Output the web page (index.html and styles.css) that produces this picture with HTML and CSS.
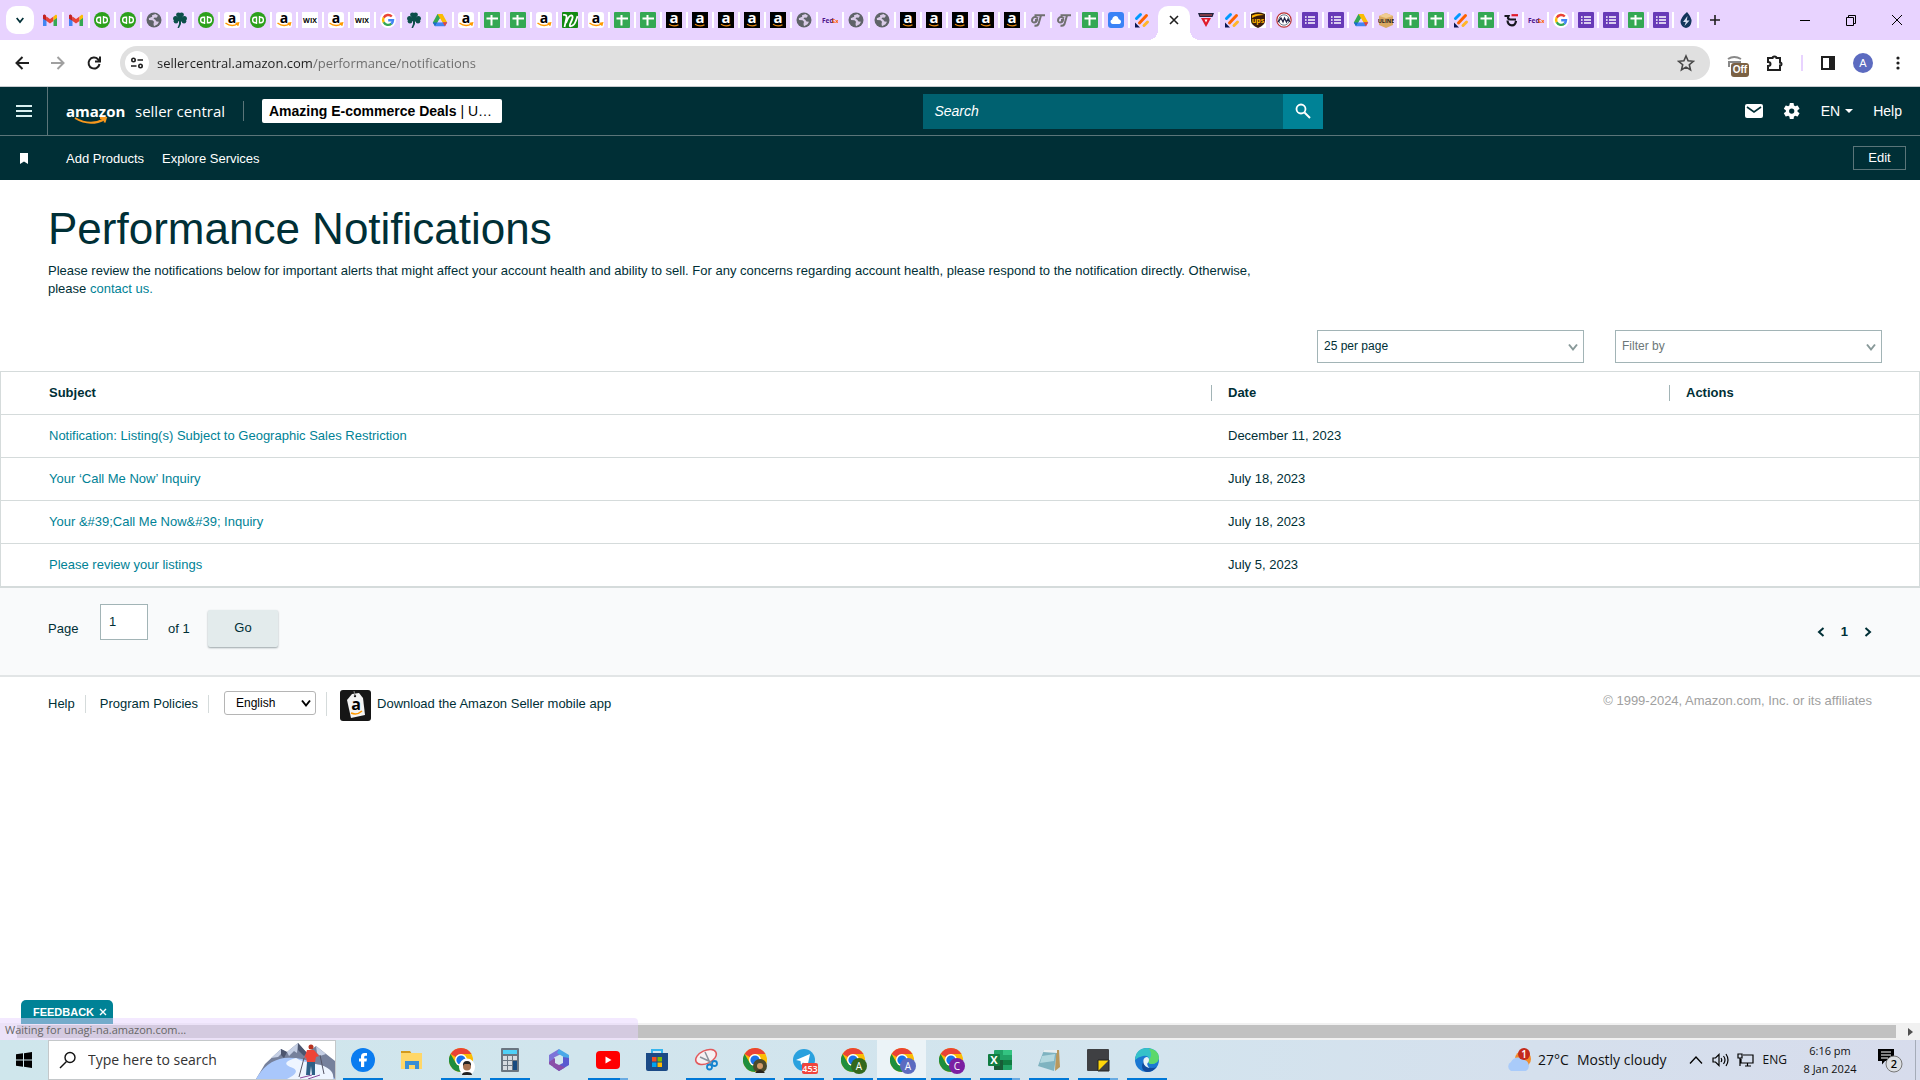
FILE: index.html
```html
<!DOCTYPE html>
<html lang="en">
<head>
<meta charset="utf-8">
<title>Performance Notifications</title>
<link rel="stylesheet" href="styles.css">
</head>
<body>
<svg class="sprite" aria-hidden="true">
  <defs>
    <symbol id="gmail" viewBox="0 0 16 16"><path d="M1 3.500 3 2.500V14H1z" fill="#4285f4"/><path d="M13 5v9h2V3.500z" fill="#34a853"/><path d="M1 3.500 4.500 5v4L1 6.500z" fill="#c5221f"/><path d="M4.500 4.500 8 7l3.500-2.500V9L8 11.500 4.500 9z" fill="#ea4335"/><path d="M11.500 4.500 14 2.500l1 1v3L11.500 9z" fill="#fbbc04"/><path d="M1 6v8h3.500V8.500z" fill="#4285f4"/><path d="M15 6v8h-3.500V8.500z" fill="#34a853"/><path d="M1 3.500q1-2 3 0L4.500 9 1 6.500z" fill="#c5221f"/></symbol>
    <symbol id="qb" viewBox="0 0 16 16"><circle cx="8" cy="8" r="8" fill="#2ca01c"/><path d="M6.500 10.700H5.300a2.700 2.700 0 0 1 0-5.400h1.200V12M9.500 4v6.700h1.200a2.700 2.700 0 0 0 0-5.400H9.500" fill="none" stroke="#fff" stroke-width="1.400"/></symbol>
    <symbol id="globe" viewBox="0 0 16 16"><circle cx="8" cy="8" r="7.500" fill="#5f6368"/><path d="M9.500 2 6 3.200l.2 1.600-3.400 1.400L3 8l3.500.2L8 9.800 7.500 12l.5 2.200 3.500-2 1.500-2.400-2.500-.4L9 7.500l-1.500-.7 1-1.300 2 .2 1.500-2z" fill="#d9cbe6"/></symbol>
    <symbol id="clover" viewBox="0 0 16 16"><g fill="#0c4f4a"><circle cx="6.500" cy="2.800" r="2.400"/><circle cx="9.500" cy="2.800" r="2.400"/><circle cx="3.600" cy="6.500" r="2.500"/><circle cx="4" cy="9.300" r="2.300"/><circle cx="12.400" cy="6.500" r="2.500"/><circle cx="12" cy="9.300" r="2.300"/><path d="M6 4h4l2 5-3 .5V12l-2 4H5.500L7 12V9L4 9z"/></g></symbol>
    <symbol id="amz" viewBox="0 0 16 16"><rect width="16" height="16" rx="3" fill="#fff"/><text x="8" y="10.500" class="glyph" font-size="14">a</text><path d="M1.500 11q6 4.500 12 .8M11.500 11.500l3-.5-.8 2.800" fill="none" stroke="#f90" stroke-width="1.500"/></symbol>
    <symbol id="amzk" viewBox="0 0 16 16"><rect width="16" height="16" fill="#000"/><text x="8" y="11" class="glyph glyph-white" font-size="15">a</text><path d="M3 12.300q5 3 9.500.4" fill="none" stroke="#e88a10" stroke-width="1.300"/></symbol>
    <symbol id="wix" viewBox="0 0 16 16"><rect width="16" height="16" fill="#fff"/><text x="8" y="10.500" class="glyph" font-size="7">WIX</text></symbol>
    <symbol id="goog" viewBox="0 0 16 16"><circle cx="8" cy="8" r="8" fill="#fff"/><g fill="none" stroke-width="2.400"><path d="M11.800 4.500A5 5 0 0 0 3.700 5.800" stroke="#ea4335"/><path d="M3.700 5.600a5 5 0 0 0 0 4.800" stroke="#fbbc05"/><path d="M3.700 10.200a5 5 0 0 0 7.700 1.500" stroke="#34a853"/><path d="M11.300 11.800A5 5 0 0 0 13 8.200H8.200" stroke="#4285f4"/></g></symbol>
    <symbol id="drive" viewBox="0 0 16 16"><path d="M5.500 2h5L8 6.300 3 14.200.8 10.500z" fill="#34a853"/><path d="M5.500 2h5l4.700 8.500h-4.800z" fill="#fbbc04"/><path d="M3 14.200 5.300 10.300h9.900L13 14.200z" fill="#4285f4"/><path d="M.8 10.500h4.400L3 14.200z" fill="#1967d2"/><path d="M10.600 10.300h4.600L13 14.200z" fill="#ea4335"/><path d="M8 6.500 10.300 10.300H5.700z" fill="#e8d3ff"/></symbol>
    <symbol id="sheet" viewBox="0 0 16 16"><rect width="16" height="16" rx="1" fill="#34a853"/><path d="M7.500 3v10.500M2.500 6.500h11.500" stroke="#fff" stroke-width="2"/></symbol>
    <symbol id="form" viewBox="0 0 16 16"><rect width="16" height="16" rx="1" fill="#673ab7"/><path d="M6 5h7M6 8h7M6 11h7M3 5h1.600M3 8h1.600M3 11h1.600" stroke="#fff" stroke-width="1.500"/></symbol>
    <symbol id="nn" viewBox="0 0 16 16"><rect width="16" height="16" rx="1" fill="#128a12"/><path d="M1 3q4-1 3.500 3L2.500 15M4 11Q7 3 9.500 3.500T9 10t1.500 3.500Q13 13 15.500 4" fill="none" stroke="#fff" stroke-width="1.800"/></symbol>
    <symbol id="fedex" viewBox="0 0 16 16"><text x="0" y="10.500" class="glyph-l" font-size="6.500" fill="#4d148c">Fed</text><text x="10" y="10.500" class="glyph-l" font-size="6" fill="#ff6200">Ex</text></symbol>
    <symbol id="tt" viewBox="0 0 16 16"><path d="M4.500 3.200H15M11 3.500 8.500 12q-1 2.300-4 1.500M8 6.500q-3.500-3-5.500 0-1.500 3.500 1.500 4 2.500 0 3-2.500H5" fill="none" stroke="#707070" stroke-width="2"/></symbol>
    <symbol id="cloud" viewBox="0 0 16 16"><rect width="16" height="16" rx="3" fill="#3b82f6"/><path d="M4.500 12a2.300 2.300 0 0 1-.3-4.500A4 4 0 0 1 8 4q1.800 0 2.800 3.200A2.500 2.500 0 0 1 11.500 12z" fill="#fff"/></symbol>
    <symbol id="jot" viewBox="0 0 16 16"><g stroke-width="3" stroke-linecap="round"><path d="M2.500 6.500 6.500 2.500" stroke="#0099ff"/><path d="M5.500 11 12.500 3.500" stroke="#ff6100"/><path d="M10 13.500l3.500-3.500" stroke="#ffb629"/></g><path d="M1 10.500V15.500H6z" fill="#0a1551"/></symbol>
    <symbol id="vv" viewBox="0 0 16 16"><path d="M0 1h16l-1.500 4h-13z" fill="#20233f"/><path d="M2 3h12" stroke="#d9534f"/><path d="M3 6h10L8 15z" fill="#e01a2b"/><path d="M6.500 7.500h3L8 10.500z" fill="#fff"/></symbol>
    <symbol id="ups" viewBox="0 0 16 16"><rect width="16" height="16" fill="#fff"/><path d="M1 2q7-3.500 14 0v7q0 4-7 7-7-3-7-7z" fill="#3a1d0c"/><path d="M2 3.500Q8 1 14 3 7 3 2 6z" fill="#ffb500"/><text x="8" y="11" class="glyph" font-size="7" fill="#ffb500">ups</text></symbol>
    <symbol id="seal" viewBox="0 0 16 16"><circle cx="8" cy="8" r="7.200" fill="#fff" stroke="#b33" stroke-width="1.200"/><circle cx="8" cy="8" r="5.200" fill="none" stroke="#678"/><path d="M2 10 5 6l2 4 1.500-4 2 4L12 7l2 3" fill="none" stroke="#224" stroke-width="1.300"/></symbol>
    <symbol id="uline" viewBox="0 0 16 16"><path d="M1 4l7-3 7 3v9l-7 3-7-3z" fill="#d9a860"/><path d="M1 4l7 2 7-2-7-3z" fill="#f0cd92"/><text x="8" y="10.500" class="glyph" font-size="5.500" fill="#222">ULINE</text></symbol>
    <symbol id="jj" viewBox="0 0 16 16"><path d="M1.500 4h4q-1.500 3.500 2 3.500H13M4.500 8.500q.3 4.800 4.500 4.800 3.500 0 4-4.500" fill="none" stroke="#17171f" stroke-width="2.200"/><path d="M8.500 3.200H15" stroke="#e01a2b" stroke-width="2.200"/></symbol>
    <symbol id="flame" viewBox="0 0 16 16"><path d="M9 0q5 6 4.500 9.500Q13 15 8 16 3 15 2.500 10 3 5 9 0z" fill="#12355b"/><path d="M9.500 4 5 10h2.800L6.500 14 11.500 8.500H8.800z" fill="#d6dcef"/></symbol>
    <symbol id="chrome" viewBox="0 0 24 24"><circle cx="12" cy="12" r="12" fill="#fbbc04"/><path d="M12 0a12 12 0 0 1 10.400 6H12a6 6 0 0 0-5.200 3L1.600 6A12 12 0 0 1 12 0z" fill="#ea4335"/><path d="M1.600 6l5.200 9A6 6 0 0 0 14 17.700L12 24A12 12 0 0 1 1.600 6z" fill="#1e8e3e"/><circle cx="12" cy="12" r="6" fill="#fff"/><circle cx="12" cy="12" r="4.600" fill="#1a73e8"/></symbol>
    <symbol id="chev" viewBox="0 0 12 12"><path d="M2 3.500 6 8.500 10 3.500" fill="none" stroke="currentColor" stroke-width="2"/></symbol>
  </defs>
</svg>

<header class="tabstrip">
  <button class="tab-list" aria-label="Search tabs"><svg width="10" height="10"><use href="#chev"/></svg></button>
  <nav class="tabs" aria-label="Tabs">
    <button class="tab"><svg><use href="#gmail"/></svg></button>
    <button class="tab"><svg><use href="#gmail"/></svg></button>
    <button class="tab"><svg><use href="#qb"/></svg></button>
    <button class="tab"><svg><use href="#qb"/></svg></button>
    <button class="tab"><svg><use href="#globe"/></svg></button>
    <button class="tab"><svg><use href="#clover"/></svg></button>
    <button class="tab"><svg><use href="#qb"/></svg></button>
    <button class="tab"><svg><use href="#amz"/></svg></button>
    <button class="tab"><svg><use href="#qb"/></svg></button>
    <button class="tab"><svg><use href="#amz"/></svg></button>
    <button class="tab"><svg><use href="#wix"/></svg></button>
    <button class="tab"><svg><use href="#amz"/></svg></button>
    <button class="tab"><svg><use href="#wix"/></svg></button>
    <button class="tab"><svg><use href="#goog"/></svg></button>
    <button class="tab"><svg><use href="#clover"/></svg></button>
    <button class="tab"><svg><use href="#drive"/></svg></button>
    <button class="tab"><svg><use href="#amz"/></svg></button>
    <button class="tab"><svg><use href="#sheet"/></svg></button>
    <button class="tab"><svg><use href="#sheet"/></svg></button>
    <button class="tab"><svg><use href="#amz"/></svg></button>
    <button class="tab"><svg><use href="#nn"/></svg></button>
    <button class="tab"><svg><use href="#amz"/></svg></button>
    <button class="tab"><svg><use href="#sheet"/></svg></button>
    <button class="tab"><svg><use href="#sheet"/></svg></button>
    <button class="tab"><svg><use href="#amzk"/></svg></button>
    <button class="tab"><svg><use href="#amzk"/></svg></button>
    <button class="tab"><svg><use href="#amzk"/></svg></button>
    <button class="tab"><svg><use href="#amzk"/></svg></button>
    <button class="tab"><svg><use href="#amzk"/></svg></button>
    <button class="tab"><svg><use href="#globe"/></svg></button>
    <button class="tab"><svg><use href="#fedex"/></svg></button>
    <button class="tab"><svg><use href="#globe"/></svg></button>
    <button class="tab"><svg><use href="#globe"/></svg></button>
    <button class="tab"><svg><use href="#amzk"/></svg></button>
    <button class="tab"><svg><use href="#amzk"/></svg></button>
    <button class="tab"><svg><use href="#amzk"/></svg></button>
    <button class="tab"><svg><use href="#amzk"/></svg></button>
    <button class="tab"><svg><use href="#amzk"/></svg></button>
    <button class="tab"><svg><use href="#tt"/></svg></button>
    <button class="tab"><svg><use href="#tt"/></svg></button>
    <button class="tab"><svg><use href="#sheet"/></svg></button>
    <button class="tab"><svg><use href="#cloud"/></svg></button>
    <button class="tab tab-last"><svg><use href="#jot"/></svg></button>
    <button class="tab-active" aria-label="Close tab"><svg width="10" height="10" viewBox="0 0 10 10"><path d="M1 1l8 8M9 1 1 9" stroke="#1f1f1f" stroke-width="1.600"/></svg></button>
    <button class="tab"><svg><use href="#vv"/></svg></button>
    <button class="tab"><svg><use href="#jot"/></svg></button>
    <button class="tab"><svg><use href="#ups"/></svg></button>
    <button class="tab"><svg><use href="#seal"/></svg></button>
    <button class="tab"><svg><use href="#form"/></svg></button>
    <button class="tab tab-slim"><svg><use href="#form"/></svg></button>
    <button class="tab tab-slim"><svg><use href="#drive"/></svg></button>
    <button class="tab tab-slim"><svg><use href="#uline"/></svg></button>
    <button class="tab tab-slim"><svg><use href="#sheet"/></svg></button>
    <button class="tab tab-slim"><svg><use href="#sheet"/></svg></button>
    <button class="tab tab-slim"><svg><use href="#jot"/></svg></button>
    <button class="tab tab-slim"><svg><use href="#sheet"/></svg></button>
    <button class="tab tab-slim"><svg><use href="#jj"/></svg></button>
    <button class="tab tab-slim"><svg><use href="#fedex"/></svg></button>
    <button class="tab tab-slim"><svg><use href="#goog"/></svg></button>
    <button class="tab tab-slim"><svg><use href="#form"/></svg></button>
    <button class="tab tab-slim"><svg><use href="#form"/></svg></button>
    <button class="tab tab-slim"><svg><use href="#sheet"/></svg></button>
    <button class="tab tab-slim"><svg><use href="#form"/></svg></button>
    <button class="tab tab-slim"><svg><use href="#flame"/></svg></button>
  </nav>
  <button class="tab-new" aria-label="New tab"><svg width="12" height="12"><path d="M6 1v10M1 6h10" stroke="#1f1f1f" stroke-width="1.600"/></svg></button>
  <div class="window-buttons">
    <button aria-label="Minimize"><svg width="12" height="12"><path d="M1 6.500h10" stroke="#000"/></svg></button>
    <button aria-label="Restore"><svg width="12" height="12" fill="none" stroke="#000"><path d="M1.500 3.500h7v8h-7zM3.500 3V1.500h7v8H9"/></svg></button>
    <button aria-label="Close"><svg width="12" height="12"><path d="M1 1l10 10M11 1 1 11" stroke="#000"/></svg></button>
  </div>
</header>

<div class="toolbar">
  <button class="tool" aria-label="Back"><svg width="16" height="16" fill="none" stroke="#1f1f1f" stroke-width="2"><path d="M15 8H3M8.500 2 2.500 8l6 6"/></svg></button>
  <button class="tool" aria-label="Forward"><svg width="16" height="16" fill="none" stroke="#a0a0a0" stroke-width="2"><path d="M1 8h12M7.500 2l6 6-6 6"/></svg></button>
  <button class="tool" aria-label="Reload"><svg width="16" height="16" fill="none" stroke="#1f1f1f" stroke-width="2"><path d="M13.500 9A5.500 5.500 0 1 1 12 4.200L14 6M14 1.500V6.500H9"/></svg></button>
  <div class="omnibox">
    <button class="site-info" aria-label="Site information"><svg width="14" height="14" fill="none" stroke="#1f1f1f" stroke-width="1.600"><circle cx="3.500" cy="4" r="1.700"/><path d="M7.500 4H13M1 10h5.500"/><circle cx="10.500" cy="10" r="1.700"/></svg></button>
    <input class="url" aria-label="Address" value="sellercentral.amazon.com/performance/notifications">
    <button class="star" aria-label="Bookmark"><svg width="18" height="18" viewBox="0 0 18 18"><path d="M9 2l2.100 4.800 5.200.5-4 3.400 1.200 5.100L9 13.100l-4.500 2.700 1.200-5.100-4-3.400 5.200-.5z" fill="none" stroke="#474747" stroke-width="1.600"/></svg></button>
  </div>
  <div class="extensions">
    <button class="ext" aria-label="Extension"><svg width="16" height="16" fill="none" stroke="#888" stroke-width="2"><path d="M1 4q6-4 13 0M2 12V7h12"/></svg><span class="off">Off</span></button>
    <button aria-label="Extensions"><svg width="18" height="18" fill="none" stroke="#1f1f1f" stroke-width="2"><path d="M2 4h4.500a2 1.500 0 0 1 4 0H14v4.500a1.500 1.500 0 0 1 0 3V16H2v-4q2.500 0 2.500-2T2 8z"/></svg></button>
    <span class="ext-line"></span>
    <button aria-label="Side panel"><svg width="16" height="16"><path d="M2 2h12v12H2z" fill="none" stroke="#1f1f1f" stroke-width="2"/><path d="M9 2h5v12H9z" fill="#1f1f1f"/></svg></button>
    <button class="avatar" aria-label="Profile">A</button>
    <button aria-label="Menu"><svg width="16" height="16" fill="#1f1f1f"><circle cx="8" cy="3" r="1.600"/><circle cx="8" cy="8" r="1.600"/><circle cx="8" cy="13" r="1.600"/></svg></button>
  </div>
</div>

<div class="page">
  <header class="site-head">
    <div class="head-left">
      <button class="burger" aria-label="Open menu"><svg width="16" height="12"><path d="M0 1h16M0 6h16M0 11h16" stroke="#d9f0f0" stroke-width="2"/></svg></button>
      <a class="logo" href="#"><span class="logo-text"><b>amazon</b> <span>seller central</span></span><svg width="34" height="9" fill="none" stroke="#f7981d" stroke-width="2"><path d="M1 1q15 9 30 1M26 1l6-.5-1.500 5"/></svg></a>
      <button class="store"><b>Amazing E-commerce Deals</b> | U…</button>
    </div>
    <form class="search">
      <input aria-label="Search" placeholder="Search">
      <button type="button" aria-label="Go search"><svg width="16" height="16" fill="none" stroke="#fff"><circle cx="6" cy="6" r="4.500" stroke-width="1.800"/><path d="M9.500 9.500 15 15" stroke-width="2"/></svg></button>
    </form>
    <div class="head-tools">
      <a href="#" aria-label="Messages"><svg width="18" height="14"><rect width="18" height="14" rx="2" fill="#fff"/><path d="M2 3l7 5 7-5" fill="none" stroke="#002f36" stroke-width="1.600"/></svg></a>
      <a href="#" aria-label="Settings"><svg width="18" height="18" viewBox="0 0 24 24"><path fill="#fff" d="M19.400 13a7.800 7.800 0 0 0 0-2l2.400-1.700a.5.500 0 0 0 .1-.7l-2.200-3.700a.5.500 0 0 0-.6-.2l-2.800 1.100a8 8 0 0 0-1.700-1L14.200 1.800a.6.600 0 0 0-.6-.5H9.500a.6.600 0 0 0-.5.500l-.5 3a8 8 0 0 0-1.600 1L4 4.700a.5.500 0 0 0-.6.200L1.300 8.600a.6.600 0 0 0 .1.700L3.800 11a7.800 7.800 0 0 0 0 2l-2.400 1.700a.5.500 0 0 0-.1.700l2.100 3.700q.2.300.6.200l2.900-1.100a8 8 0 0 0 1.600 1l.5 3q.1.500.5.500h4.100q.5 0 .6-.5l.4-3a8 8 0 0 0 1.700-1l2.800 1.100q.4.100.6-.2l2.200-3.700a.5.500 0 0 0-.1-.7zM11.600 15.500a3.500 3.500 0 1 1 0-7 3.500 3.500 0 0 1 0 7z"/></svg></a>
      <a href="#">EN <svg width="8" height="4"><path d="M0 0h8L4 4z" fill="#fff"/></svg></a>
      <a href="#">Help</a>
    </div>
  </header>
  <nav class="site-nav">
    <span class="bookmark"><svg width="8" height="11"><path d="M0 0h8v11L4 8.500 0 11z" fill="#fff"/></svg></span>
    <a href="#">Add Products</a>
    <a href="#">Explore Services</a>
    <button class="edit">Edit</button>
  </nav>

  <main>
    <section class="intro">
      <h1>Performance Notifications</h1>
      <p>Please review the notifications below for important alerts that might affect your account health and ability to sell. For any concerns regarding account health, please respond to the notification directly. Otherwise, please <a href="#">contact us.</a></p>
    </section>
    <div class="filters">
      <span class="pick"><select aria-label="Page size"><option>25 per page</option></select><svg width="12" height="12"><use href="#chev"/></svg></span>
      <span class="pick pick-muted"><select aria-label="Filter"><option>Filter by</option></select><svg width="12" height="12"><use href="#chev"/></svg></span>
    </div>
    <table class="notes">
      <thead><tr><th>Subject</th><th class="col-date">Date</th><th class="col-act">Actions</th></tr></thead>
      <tbody>
        <tr><td><a href="#">Notification: Listing(s) Subject to Geographic Sales Restriction</a></td><td>December 11, 2023</td><td></td></tr>
        <tr><td><a href="#">Your ‘Call Me Now’ Inquiry</a></td><td>July 18, 2023</td><td></td></tr>
        <tr><td><a href="#">Your &amp;#39;Call Me Now&amp;#39; Inquiry</a></td><td>July 18, 2023</td><td></td></tr>
        <tr><td><a href="#">Please review your listings</a></td><td>July 5, 2023</td><td></td></tr>
      </tbody>
    </table>
    <form class="pager">
      <label for="pg">Page</label>
      <input id="pg" value="1">
      <span class="of">of 1</span>
      <button type="button" class="go">Go</button>
      <div class="pages">
        <a href="#" aria-label="Previous"><svg width="8" height="10" fill="none" stroke="#002f36" stroke-width="2"><path d="M6.500 1 2 5l4.500 4"/></svg></a>
        <b>1</b>
        <a href="#" aria-label="Next"><svg width="8" height="10" fill="none" stroke="#002f36" stroke-width="2"><path d="M1.500 1 6 5 1.500 9"/></svg></a>
      </div>
    </form>
  </main>

  <footer class="site-foot">
    <a class="foot-link" href="#">Help</a>
    <a class="foot-link" href="#">Program Policies</a>
    <span class="lang"><select aria-label="Language"><option>English</option></select><svg width="12" height="12"><use href="#chev"/></svg></span>
    <a class="foot-app" href="#"><svg width="31" height="31" viewBox="0 0 31 31"><rect width="31" height="31" rx="3" fill="#161616"/><path d="M7 10l5-6 7-1 4 5 2 17-14 3z" fill="#f4f4f4"/><circle cx="15" cy="6" r="1.200" fill="#161616"/><path d="M15 6 14 1" stroke="#888"/><text x="16" y="20" class="glyph" font-size="16">a</text><path d="M11 23q6 2.500 11-2" fill="none" stroke="#f90" stroke-width="1.500"/></svg>Download the Amazon Seller mobile app</a>
    <span class="copy">© 1999-2024, Amazon.com, Inc. or its affiliates</span>
  </footer>

  <div class="hscroll"><span class="thumb"></span><svg width="6" height="8"><path d="M0 0l5 4-5 4z" fill="#505050"/></svg></div>
  <button class="feedback">FEEDBACK <svg width="8" height="8"><path d="M1 1l6 6M7 1 1 7" stroke="#fff" stroke-width="1.400"/></svg></button>
  <div class="status">Waiting for unagi-na.amazon.com...</div>
</div>

<footer class="taskbar">
  <button class="start" aria-label="Start"><svg width="16" height="16"><path d="M0 2.300 7 1.300V7.500H0zM8 1.200 16 0v7.500H8zM0 8.500h7v6.200l-7-1zM8 8.500h8V16l-8-1.200z" fill="#000"/></svg></button>
  <div class="task-search">
    <svg width="18" height="18" fill="none" stroke="#111" stroke-width="1.400"><circle cx="11" cy="6.500" r="5"/><path d="M7.500 10.500 1 17"/></svg>
    <input aria-label="Search this computer" placeholder="Type here to search">
    <svg class="ski" width="79" height="38" viewBox="0 0 79 38"><path d="M9 23 25 8l6 3L42 2l9 10 9-7 19 15v18H0z" fill="#76819c"/><path d="M42 2l9 10-3 3-6-6zM25 8l6 3-3 6-3-3z" fill="#4c556e"/><path d="M25 8l-10 9 7-1 3-3zM42 2 31 11l2 4 5-5 3 2zM60 5l10 8-6 2-3-3z" fill="#c5cfe4"/><path d="M0 38Q10 20 28 17q30-2 51 21z" fill="#a9c7fb"/><path d="M40 17q-18 5-3 10 8 4-6 11h46q2-9-12-14-20-3-25-7z" fill="#eef5ff"/><circle cx="55" cy="6" r="2.500" fill="#b8321f"/><path d="M51 9h7l5 6-3 1-1 5h-8l-1-5-2 2z" fill="#ef4437"/><path d="M51 21h8l0 13h-3l-1-9-1 9h-4z" fill="#2d5f86"/><path d="M48 17 43 36M64 14l4 19" stroke="#556"/><path d="M44 37l12-3M52 38l12-4" stroke="#8a4a9c"/></svg>
  </div>
  <div class="apps">
    <button class="app open"><svg viewBox="0 0 24 24"><circle cx="12" cy="12" r="12" fill="#0a7cf0"/><path d="M10 19v-5.500H8v-3h2V8.500q0-3.500 3.500-3.500H16v2.700h-1.500q-1.300 0-1.300 1.300v1.500H16l-.5 3h-2.300V19z" fill="#fff"/></svg></button>
    <button class="app"><svg viewBox="0 0 24 24"><path d="M1 3h9l2 3H1z" fill="#d39a1c"/><path d="M1 5h21v16H1z" fill="#ffd768"/><path d="M5 21v-8h14v8h-4v-4H9v4z" fill="#3a8fd6"/></svg></button>
    <button class="app open"><svg viewBox="0 0 24 24"><use href="#chrome"/></svg><span class="face"><svg width="16" height="18"><ellipse cx="8" cy="9" rx="8" ry="8.500" fill="#fff"/><path d="M3 17q0-3 5-3t5 3z" fill="#222"/><circle cx="8" cy="8.500" r="4" fill="#a87350"/><path d="M4 8Q3.500 3 8 3t4 5l-1.500-2h-5z" fill="#222"/></svg></span></button>
    <button class="app open"><svg viewBox="0 0 24 24"><rect x="3" width="18" height="24" rx="1" fill="#6b7681"/><rect x="5" y="2" width="14" height="4" fill="#4fd0f7"/><path d="M5 8h4v4H5zM10 8h4v4h-4zM15 8h4v4h-4zM5 13h4v4H5zM10 13h4v4h-4zM5 18h4v4H5zM10 18h4v4h-4z" fill="#d6dbe0"/><path d="M15 13h4v9h-4z" fill="#164a80"/></svg></button>
    <button class="app"><svg viewBox="0 0 24 24"><path d="M12 1 2 7v9l5 3V9.500L14 6z" fill="#7d74d8"/><path d="M12 1l10 6v7l-6-3.500V8.500L10 5z" fill="#4aa8e8"/><path d="M22 10v7l-10 6-6-4 10-6V9z" fill="#5a5ad0"/><path d="M2 16l10 7 6-3.500L8 14.500V10l-6 4z" fill="#8a4fa8"/><path d="M12 8l4 2v5L12 17l-4-2v-5z" fill="#d3e7ed"/></svg></button>
    <button class="app open many"><svg viewBox="0 0 24 24"><rect y="3" width="24" height="18" rx="4" fill="#f00"/><path d="M9.500 8.500v7l6-3.500z" fill="#fff"/></svg></button>
    <button class="app"><svg viewBox="0 0 24 24"><path d="M7 6V2h10v4" fill="none" stroke="#35b5ee" stroke-width="2"/><path d="M1 5h22v16q0 2-2 2H3q-2 0-2-2z" fill="#1b4a86"/><path d="M7 9h4.500v4.500H7z" fill="#f25022"/><path d="M12.500 9H17v4.500h-4.500z" fill="#7fba00"/><path d="M7 14.500h4.500V19H7z" fill="#00a4ef"/><path d="M12.500 14.500H17V19h-4.500z" fill="#ffb900"/></svg></button>
    <button class="app open"><svg viewBox="0 0 24 24"><ellipse cx="12" cy="9" rx="11" ry="6.500" transform="rotate(-25 12 9)" fill="#f6f1f3" stroke="#e2595c" stroke-width="1.500"/><path d="M11 4l6 13M6 9l11 5" stroke="#8a929c" stroke-width="1.500"/><circle cx="15.500" cy="19" r="2.500" fill="none" stroke="#1583cf" stroke-width="1.800"/><circle cx="20.500" cy="15.500" r="2.500" fill="none" stroke="#1583cf" stroke-width="1.800"/></svg></button>
    <button class="app open"><svg viewBox="0 0 24 24"><use href="#chrome"/></svg><span class="face"><svg width="14" height="16"><circle cx="7" cy="8" r="7" fill="#4b4a2b"/><circle cx="7" cy="8" r="3" fill="#d19a68"/><path d="M2 15q5-6 10 0z" fill="#26221c"/></svg></span></button>
    <button class="app open"><svg viewBox="0 0 24 24"><circle cx="12" cy="12" r="11" fill="#2aa1de"/><path d="M4 12 18 6l-2.500 12-4.500-3.500L9 17l-.5-4z" fill="#fff"/></svg><span class="count">453</span></button>
    <button class="app open"><svg viewBox="0 0 24 24"><use href="#chrome"/></svg><span class="who who-green">A</span></button>
    <button class="app open current"><svg viewBox="0 0 24 24"><use href="#chrome"/></svg><span class="who who-blue">A</span></button>
    <button class="app open"><svg viewBox="0 0 24 24"><use href="#chrome"/></svg><span class="who who-purple">C</span></button>
    <button class="app open many"><svg viewBox="0 0 24 24"><rect x="6" y="2" width="18" height="20" rx="1" fill="#21a366"/><path d="M15 2h8q1 0 1 1v4h-9z" fill="#33c481"/><path d="M6 12h9v10H7q-1 0-1-1z" fill="#185c37"/><path d="M15 12h9v5h-9z" fill="#107c41"/><rect y="6" width="12" height="12" rx="1" fill="#107c41"/><text x="6" y="16" class="glyph glyph-white" font-size="11">X</text></svg></button>
    <button class="app open"><svg viewBox="0 0 24 24"><path d="M19 2h3l1 17-5 4z" fill="#b9985c"/><path d="M7 2h13l-3 21-16-5z" fill="#7fb3c0"/><path d="M7 2h13v3L6 4z" fill="#e7eef0"/><path d="M5 8 18 6l-1 7-14 2z" fill="#b3d8df"/></svg></button>
    <button class="app open many"><svg viewBox="0 0 24 24"><rect x="1" y="1" width="22" height="22" rx="1" fill="#3f4043"/><path d="M12 23V12h11z" fill="#ffd60a"/><path d="M12 12h11v11H12z" fill="none" stroke="#222"/></svg></button>
    <button class="app open"><svg viewBox="0 0 24 24"><circle cx="12" cy="12" r="12" fill="#1b78d2"/><path d="M0 12Q1 0 12 0t12 10q-1 6-8 6-4-1-2-4 0-5-6-4-5 1-8 4z" fill="#35c1c9"/><path d="M14 .5Q24 2 24 10q-1 6-8 6-4-1-2-4 4-5 0-11.500z" fill="#5cd86a"/><path d="M9 12q-1 8 8 8 3 0 5-1.500Q18 24 12 24 4 22 9 12z" fill="#114a9c"/><path d="M14 12q0-3-2.500-3-4 1-3 6 1 4 6 5-4-4-1-6z" fill="#e8f2f8"/></svg></button>
  </div>
  <div class="tray">
    <svg width="26" height="26" class="weather"><circle cx="17" cy="12" r="8" fill="#f28b2a"/><path d="M5 24a5 5 0 0 1 0-9 8 8 0 0 1 13-2 6 6 0 0 1 2 11z" fill="#a9cbfa"/><circle cx="18" cy="7" r="6" fill="#c42b1c"/><text x="18" y="11" class="glyph glyph-white glyph-thin" font-size="10">1</text></svg>
    <span>27°C</span><span class="sky">Mostly cloudy</span>
    <svg width="14" height="10" fill="none" stroke="#000" stroke-width="1.300"><path d="M1 8.500 7 2l6 6.500"/></svg>
    <svg width="18" height="14" class="vol" fill="none" stroke="#000" stroke-width="1.200"><path d="M1 5h2.500L7 1.500v11L3.500 9H1zM9 5q1.500 2 0 4M11.500 3q3 4 0 8M14 1q4 6 0 12"/></svg>
    <svg width="17" height="14" fill="none" stroke="#000" stroke-width="1.200"><path d="M6 2h10v8H4V6M8 13h6M10.500 10v3M1 1h4v4H1zM3 5v8"/></svg>
    <span class="lang-ind">ENG</span>
    <div class="clock"><span>6:16 pm</span><span>8 Jan 2024</span></div>
    <button class="notif" aria-label="Notifications"><svg width="26" height="26"><path d="M0 2h16v12H7l-3 3.500V14H0z" fill="#000"/><path d="M3 5h10M3 8h10M3 11h7" stroke="#fff"/><circle cx="16" cy="17" r="8" fill="#dcdfe3" stroke="#777"/><text x="16" y="21" class="glyph glyph-thin" font-size="11">2</text></svg></button>
    <button class="show-desktop" aria-label="Show desktop"></button>
  </div>
</footer>
</body>
</html>
```
FILE: styles.css
```css
* { box-sizing: border-box; }

body {
  margin: 0;
  min-height: 100vh;
  display: flex;
  flex-direction: column;
  background: #fff;
  color: #002f36;
  font: 13px/18px "Liberation Sans", Arial, sans-serif;
}

button, input, select { font: inherit; color: inherit; margin: 0; }
button { border: 0; padding: 0; background: none; display: flex; align-items: center; justify-content: center; }
input { border: 0; padding: 0; outline: 0; background: none; min-width: 0; }
a { color: #008296; text-decoration: none; }
svg { flex: none; display: block; }

.sprite { position: absolute; width: 0; height: 0; }
.glyph { font-family: "Open Sans", sans-serif; font-weight: 700; text-anchor: middle; }
.glyph-l { font-family: "Open Sans", sans-serif; font-weight: 700; }
.glyph-white { fill: #fff; }
.glyph-thin { font-weight: 600; }

/* Browser tabs */
.tabstrip { display: flex; align-items: center; height: 40px; background: #e8d3ff; }
.tab-list { width: 28px; height: 28px; margin: 0 4px 0 6px; border-radius: 10px; background: #fff; }
.tabs { display: flex; align-items: center; height: 40px; }
.tab { width: 26px; height: 16px; padding-left: 4px; justify-content: flex-start; border-right: 2px solid #fff; }
.tab svg { width: 16px; height: 16px; }
.tab-slim { width: 25px; }
.tab-last { border-right-color: transparent; }
.tab-active { position: relative; align-self: flex-end; width: 32px; height: 34px; padding-bottom: 6px; margin: 0 4px 0 2px; border-radius: 10px 10px 0 0; background: #fff; }
.tab-active::before, .tab-active::after { content: ""; position: absolute; bottom: 0; width: 10px; height: 10px; }
.tab-active::before { right: 100%; background: radial-gradient(circle at 0 0, transparent 10px, #fff 10px); }
.tab-active::after { left: 100%; background: radial-gradient(circle at 100% 0, transparent 10px, #fff 10px); }
.tab-new { width: 32px; height: 28px; }
.window-buttons { display: flex; margin-left: auto; }
.window-buttons button { width: 46px; height: 40px; }

/* Browser toolbar */
.toolbar { display: flex; align-items: center; height: 47px; padding: 0 14px 0 4px; border-bottom: 1px solid #c8ccd0; }
.tool { width: 36px; height: 34px; }
.omnibox { display: flex; align-items: center; flex: 1; height: 34px; margin-left: 8px; padding: 0 15px 0 5px; border-radius: 17px; background: #e0e0e0; }
.site-info { width: 24px; height: 24px; border-radius: 12px; background: #fff; }
.url { flex: 1; margin-left: 8px; font: 13px/20px "Open Sans", sans-serif; color: transparent; background: linear-gradient(90deg, #1f1f1f 156px, #6a6a6a 156px); background-clip: text; -webkit-background-clip: text; }
.extensions { display: flex; align-items: center; justify-content: space-between; width: 185px; margin-left: 11px; }
.ext { position: relative; width: 28px; height: 28px; }
.off { position: absolute; right: 0; bottom: 0; width: 18px; border-radius: 3px; background: #7b6144; color: #fff; font-size: 10px; font-weight: 700; line-height: 14px; }
.ext-line { width: 2px; height: 16px; background: #e8d3ff; }
.avatar { width: 20px; height: 20px; border-radius: 50%; background: #5c6bc0; color: #fff; font-size: 11px; }

/* Site header */
.page { position: relative; flex: 1; display: flex; flex-direction: column; }
.site-head { display: flex; align-items: center; justify-content: space-between; height: 49px; background: #002f36; border-bottom: 1px solid #5b7579; color: #fff; }
.head-left { display: flex; align-items: center; align-self: stretch; }
.burger { width: 48px; align-self: stretch; border-right: 1px solid #5b7579; }
.logo { position: relative; width: 178px; margin-left: 18px; padding-right: 18px; border-right: 1px solid #5b7579; color: #fff; font: 15px/20px "Open Sans", sans-serif; white-space: nowrap; }
.logo-text { display: flex; justify-content: space-between; }
.logo svg { position: absolute; left: 8px; top: 16px; }
.store { width: 240px; height: 24px; margin-left: 18px; padding-left: 7px; justify-content: flex-start; border-radius: 2px; background: #fff; color: #000; font-size: 14px; white-space: pre; }
.search { display: flex; width: 400px; height: 35px; }
.search input { flex: 1; padding-left: 11px; background: #006170; color: #fff; font-size: 14px; font-style: italic; }
.search input::placeholder { color: #fff; opacity: 1; }
.search button { width: 40px; background: #008296; }
.head-tools { display: flex; align-items: center; gap: 20px; padding-right: 18px; font-size: 14px; }
.head-tools a { display: flex; align-items: center; gap: 5px; color: #fff; }
.site-nav { display: flex; align-items: center; height: 44px; padding-right: 14px; background: #002f36; color: #fff; }
.bookmark { width: 66px; padding-left: 20px; }
.site-nav a { margin-right: 18px; padding-top: 2px; color: #fff; }
.edit { width: 53px; height: 24px; margin-left: auto; border: 1px solid #5b7579; color: #fff; }

/* Notifications */
.intro { padding: 25px 48px 0; }
.intro h1 { margin: 0; font-size: 44px; font-weight: 400; line-height: 48px; }
.intro p { max-width: 1224px; margin: 9px 0 0; }
.filters { display: flex; justify-content: flex-end; gap: 31px; padding: 32px 38px 8px 0; }
.pick { position: relative; width: 267px; }
.pick select { appearance: none; width: 100%; height: 33px; padding: 0 6px 2px; border: 1px solid #a2b4b6; border-radius: 0; background: #fff; font-size: 12px; }
.pick svg { position: absolute; right: 5px; top: 11px; color: #899; }
.pick-muted select { color: #6c7778; }
.notes { width: 100%; table-layout: fixed; border-collapse: separate; border-spacing: 0; border: 1px solid #d5dbdb; }
.notes th, .notes td { height: 43px; padding: 0 0 1px 48px; border-bottom: 1px solid #d5dbdb; text-align: left; }
.notes tr > :nth-child(n+2) { padding-left: 17px; }
.notes .col-date { width: 458px; }
.notes .col-act { width: 250px; }
.notes th:nth-child(n+2) { background: linear-gradient(#a2b4b6, #a2b4b6) 0 50% / 1px 16px no-repeat; }
.pager { display: flex; align-items: flex-start; height: 89px; padding: 16px 48px 0; background: #f9fafb; border-bottom: 2px solid #e2e5e6; }
.pager label { width: 52px; padding-top: 16px; }
.pager input { width: 48px; height: 36px; padding: 0 0 2px 8px; border: 1px solid #a2b4b6; background: #fff; }
.of { width: 60px; padding: 16px 0 0 20px; }
.go { width: 70px; height: 37px; margin-top: 6px; padding-bottom: 2px; border-radius: 2px; background: #e3ebec; box-shadow: 0 1px 2px #9aa5a8; }
.pages { display: flex; align-items: center; gap: 16px; margin: 19px 0 0 auto; }

.site-foot { display: flex; align-items: flex-start; padding: 13px 48px; line-height: 28px; }
.site-foot a { color: #002f36; }
.foot-link { padding-right: 11px; margin-right: 14px; background: linear-gradient(#d5dbdb, #d5dbdb) 100% 50% / 1px 18px no-repeat; }
.lang { position: relative; margin: 0 13px 0 1px; padding-right: 11px; background: linear-gradient(#d5dbdb, #d5dbdb) 100% 50% / 1px 24px no-repeat; }
.lang select { appearance: none; display: block; width: 92px; height: 24px; margin: 1px 0 3px; padding: 0 11px; border: 1px solid #b5b5b5; border-radius: 3px; background: #fff; color: #000; font-size: 12px; line-height: 18px; }
.lang svg { position: absolute; right: 15px; top: 7px; color: #000; }
.foot-app { display: flex; gap: 6px; }
.copy { margin-left: auto; line-height: 22px; color: #a0a0a0; }

.hscroll { display: flex; align-items: center; height: 17px; margin-top: auto; padding: 0 6px 0 17px; background: #f1f1f1; }
.thumb { flex: 1; height: 13px; margin-right: 12px; background: #c1c1c1; }
.feedback { position: absolute; left: 21px; bottom: 16px; width: 92px; height: 24px; gap: 5px; padding-left: 6px; border-radius: 5px 5px 0 0; background: #008296; color: #fff; font-size: 11px; font-weight: 700; }
.status { position: absolute; left: 0; bottom: 0; width: 638px; height: 22px; padding-left: 5px; border-radius: 0 4px 0 0; background: rgba(232, 211, 255, .5); color: #666; font: 11px/24px "Open Sans", sans-serif; }

/* Taskbar */
.taskbar { display: flex; height: 40px; background: linear-gradient(90deg, #cfe6ec, #d3e4ee 60%, #d7dcec); color: #111; font: 14px/20px "Open Sans", sans-serif; }
.start { width: 48px; }
.task-search { display: flex; align-items: center; width: 288px; border: 1px solid #c4c8ca; background: #fff; }
.task-search > svg:first-child { margin-left: 10px; }
.task-search input { flex: 1; margin-left: 11px; }
.task-search input::placeholder { color: #333; opacity: 1; }
.apps { display: flex; padding-left: 2px; }
.app { position: relative; width: 49px; height: 40px; }
.app > svg { width: 24px; height: 24px; }
.open::after { content: ""; position: absolute; left: 5px; right: 4px; bottom: 0; height: 2px; background: #0078d7; }
.many::after { background: linear-gradient(90deg, #0078d7 32px, #69abe2 32px); }
.current { background: #ebf3f7; }
.current::after { left: 0; right: 0; }
.face, .who, .count { position: absolute; left: 23px; top: 18px; width: 16px; height: 16px; }
.who { border-radius: 50%; color: #fff; font-size: 10px; line-height: 16px; }
.who-green { background: #33691e; }
.who-blue { background: #5c6bc0; }
.who-purple { background: #7b1fa2; }
.count { top: 23px; height: 11px; border-radius: 2px; background: #f0443c; color: #fff; font-size: 9px; font-weight: 600; line-height: 11px; }
.tray { display: flex; align-items: center; margin-left: auto; white-space: nowrap; }
.weather { margin-right: 6px; }
.sky { margin: 0 22px 0 8px; }
.vol { margin: 0 7px 0 9px; }
.lang-ind { margin: 0 15px 0 9px; font-size: 12px; }
.clock { display: flex; flex-direction: column; align-items: center; width: 56px; margin-right: 19px; font-size: 11px; line-height: 18px; }
.notif { width: 28px; height: 40px; }
.show-desktop { width: 5px; height: 40px; margin-left: 10px; border-left: 1px solid #a5acb8; }
```
